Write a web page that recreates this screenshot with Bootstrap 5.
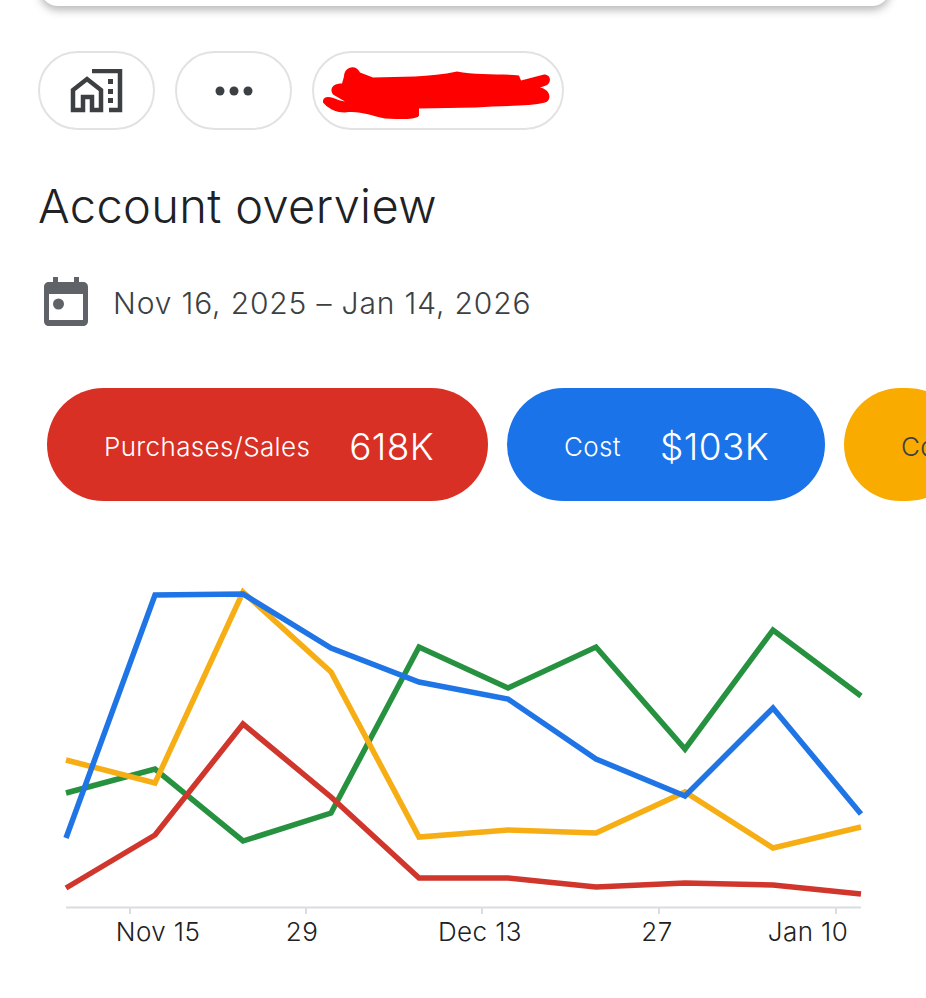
<!DOCTYPE html>
<html>
<head>
    <title>Account overview</title>
    <link rel="stylesheet" href="https://cdn.jsdelivr.net/npm/bootstrap@5.3.0/dist/css/bootstrap.min.css">
    <style>
        html, body { height: 998px; overflow: hidden; background: #fff; }
        body { font-family: Inter, "Liberation Sans", sans-serif; }
        .top-sheet {
            height: 30px;
            margin: -24px 36px 45px 40px;
            background: #fff;
            border-radius: 0 0 18px 18px;
            box-shadow: 0 4px 9px rgba(60, 64, 67, .38);
        }
        .crumbs { padding-left: 38px; gap: 20px; height: 79px; }
        .crumb {
            width: 117px;
            height: 79px;
            border: 2px solid #e1e3e1;
            border-radius: 40px;
            background: #fff;
        }
        .crumb-wide { width: 252px; }
        .page-title {
            margin: 48px 0 0 38px;
            font-size: 47px;
            line-height: 56px;
            letter-spacing: .35px;
            font-weight: 300;
            color: #202124;
        }
        .date-row { margin: 43px 0 0 44px; gap: 25px; height: 50px; }
        .date-text { font-size: 30px; letter-spacing: .85px; padding-top: 3px; font-weight: 300; color: #3c4043; }
        .metrics { margin: 61px 0 0 47px; gap: 19px; height: 113px; overflow: hidden; }
        .metric {
            flex: none;
            height: 113px;
            border-radius: 57px;
            padding: 4px 0 0 57px;
            color: #fff;
        }
        .metric-name { font-size: 26px; letter-spacing: .35px; font-weight: 300; }
        .metric-value { font-size: 37px; letter-spacing: .4px; font-weight: 300; margin-left: 39px; }
        .metric-red { width: 441px; background: #d93025; }
        .metric-blue { width: 318px; background: #1a73e8; }
        .metric-amber { width: 120px; background: #f9ab00; color: #3c4043; }
        .chart-wrap { margin-top: 60px; }
        .chart-wrap svg { display: block; }
        .tick-label { font-family: Inter, "Liberation Sans", sans-serif; font-size: 26px; letter-spacing: .4px; font-weight: 300; fill: #202124; }
    </style>
</head>
<body>
    <div class="top-sheet"></div>

    <div class="d-flex crumbs">
        <div class="crumb d-flex align-items-center justify-content-center">
            <svg width="54" height="44" viewBox="70 69 54 44" fill="none">
                <path d="M92 71H120V110H109" stroke="#3c4043" stroke-width="4.500"/>
                <path d="M73 110H83V97H92V110H101V90L87 79L73 90Z" stroke="#3c4043" stroke-width="4.500"/>
                <rect x="108" y="79" width="5" height="5" fill="#3c4043"/>
                <rect x="108" y="89" width="5" height="5" fill="#3c4043"/>
                <rect x="108" y="98" width="5" height="5" fill="#3c4043"/>
            </svg>
        </div>
        <div class="crumb d-flex align-items-center justify-content-center">
            <svg width="38" height="12" viewBox="0 0 38 12" fill="#3c4043">
                <circle cx="5" cy="6" r="4.500"/>
                <circle cx="19" cy="6" r="4.500"/>
                <circle cx="33" cy="6" r="4.500"/>
            </svg>
        </div>
        <div class="crumb crumb-wide d-flex align-items-center justify-content-center">
            <svg width="232" height="56" viewBox="322 62.500 232 56" fill="#ff0000">
                <path d="M323 100C325 94 332 97 340 100L345 101L333 94C329 88 333 83 342 83L344 76C344 66 356 63 360 72L373 77C400 76 430 77 457 71C475 75 500 73 519 75L521 80L544 74C551 74 552 82 546 85L540 87C551 89 552 100 545 102C530 106 500 105 476 107L419 108L419 115C418 119 400 119 385 118C370 115 360 110 345 112C335 112 327 107 323 102Z"/>
            </svg>
        </div>
    </div>

    <h1 class="page-title">Account overview</h1>

    <div class="d-flex align-items-center date-row">
        <svg width="44" height="50" viewBox="0 0 44 50">
            <path d="M9 0H14V5H30V0H35V5H39C42 5 44 7 44 10V44C44 47 42 49 39 49H5C2 49 0 47 0 44V10C0 7 2 5 5 5H9ZM5 17V43H39V17Z" fill="#5f6368" fill-rule="evenodd"/>
            <circle cx="14.500" cy="27" r="5.500" fill="#5f6368"/>
        </svg>
        <span class="date-text">Nov 16, 2025 – Jan 14, 2026</span>
    </div>

    <div class="d-flex metrics">
        <div class="metric metric-red d-flex align-items-center">
            <span class="metric-name">Purchases/Sales</span>
            <span class="metric-value">618K</span>
        </div>
        <div class="metric metric-blue d-flex align-items-center">
            <span class="metric-name">Cost</span>
            <span class="metric-value">$103K</span>
        </div>
        <div class="metric metric-amber d-flex align-items-center">
            <span class="metric-name">Co</span>
        </div>
    </div>

    <div class="chart-wrap">
        <svg width="926" height="397" viewBox="0 561 926 397" id="chart"></svg>
    </div>

    <script>
        // points are x,y in page pixels
        const xs = [66, 155, 243, 331, 419, 508, 596, 685, 773, 861];
        const series = [
            { color: '#26913f', ys: [793, 769, 841, 813, 647, 688, 647, 749, 630, 696] },
            { color: '#f6ae14', ys: [760, 783, 592, 672, 837, 830, 833, 792, 848, 827] },
            { color: '#d0362c', ys: [888, 835, 724, 797, 878, 878, 887, 883, 885, 894] },
            { color: '#1f75e6', ys: [838, 595, 594, 648, 682, 699, 759, 796, 708, 814] }
        ];
        const chart = document.getElementById('chart');
        let out = '<line x1="66" y1="907.500" x2="861" y2="907.500" stroke="#dadce0" stroke-width="2"/>';
        [[130, 'Nov 15', 158], [306, '29', 302], [482, 'Dec 13', 480], [659, '27', 657], [836, 'Jan 10', 808]].forEach(t => {
            out += `<line x1="${t[0]}" y1="908" x2="${t[0]}" y2="914" stroke="#dadce0" stroke-width="2"/>`;
            out += `<text class="tick-label" x="${t[2]}" y="941" text-anchor="middle">${t[1]}</text>`;
        });
        series.forEach(s => {
            const pts = s.ys.map((y, i) => xs[i] + ',' + y).join(' ');
            out += `<polyline points="${pts}" fill="none" stroke="${s.color}" stroke-width="5.500" stroke-linejoin="miter"/>`;
        });
        chart.innerHTML = out;
    </script>
    <script src="https://cdn.jsdelivr.net/npm/bootstrap@5.3.0/dist/js/bootstrap.bundle.min.js"></script>
</body>
</html>
